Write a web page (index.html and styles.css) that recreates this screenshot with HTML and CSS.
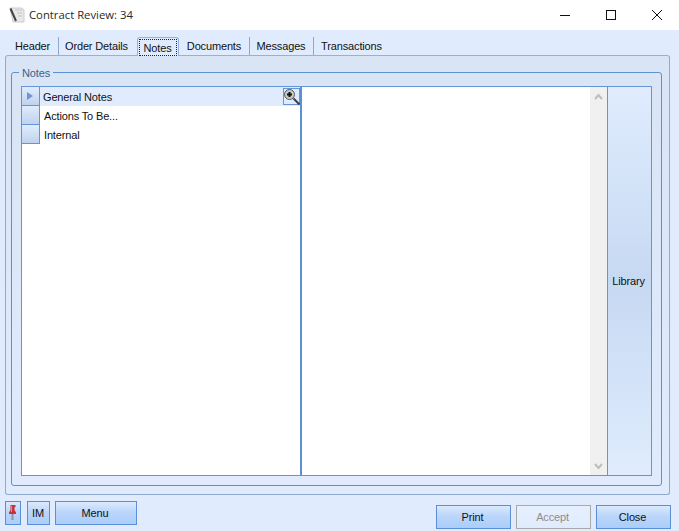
FILE: index.html
```html
<!DOCTYPE html>
<html lang="en">
<head>
<meta charset="utf-8">
<title>Contract Review: 34</title>
<link rel="stylesheet" href="styles.css">
</head>
<body>
<div class="window">
  <header class="titlebar">
    <svg class="doc-icon" width="16" height="16" viewBox="0 0 16 16">
      <path d="M1 1H13L15 3V15H4Z" fill="#e8e8e8" stroke="#cccccc"/>
      <path d="M1.500 1.500L7 14" stroke="#3c4248" stroke-width="2"/>
      <path d="M6 3H13M8 6H13M9 9H13" stroke="#c4c4c4"/>
    </svg>
    <span class="title">Contract Review: 34</span>
    <div class="winbtns">
      <svg width="12" height="12" viewBox="0 0 12 12"><path d="M1 6.500H11" stroke="#111"/></svg>
      <svg width="12" height="12" viewBox="0 0 12 12"><rect x="1.500" y="1.500" width="9" height="9" fill="none" stroke="#111"/></svg>
      <svg width="12" height="12" viewBox="0 0 12 12"><path d="M1 1L11 11M11 1L1 11" stroke="#111"/></svg>
    </div>
  </header>
  <main class="client">
    <nav class="tabs">
      <span class="tab sep w-header">Header</span>
      <span class="tab w-order">Order Details</span>
      <span class="tab active"><span class="focus">Notes</span></span>
      <span class="tab sep w-docs">Documents</span>
      <span class="tab sep w-msgs">Messages</span>
      <span class="tab w-trans">Transactions</span>
    </nav>
    <section class="panel">
      <div class="group">
        <span class="legend">Notes</span>
        <div class="grid">
          <div class="list">
            <div class="row selected">
              <span class="rowhead"><span class="arrow"></span></span>
              <span class="cell">General Notes</span>
              <span class="zoombtn">
                <svg width="16" height="16" viewBox="0 0 16 16">
                  <circle cx="5.500" cy="5.500" r="5" fill="#c4c8c8" stroke="#5a5a5a"/>
                  <path d="M3 5.500H8M5.500 3V8" stroke="#111" stroke-width="2"/>
                  <path d="M9.500 9.500L15.500 15.500" stroke="#3a3f48" stroke-width="2"/>
                </svg>
              </span>
            </div>
            <div class="row">
              <span class="rowhead"></span>
              <span class="cell plain">Actions To Be...</span>
            </div>
            <div class="row">
              <span class="rowhead"></span>
              <span class="cell plain">Internal</span>
            </div>
          </div>
          <div class="editor"></div>
          <div class="scrollbar">
            <svg width="9" height="7" viewBox="0 0 9 7"><path d="M1 6L4.500 2L8 6" fill="none" stroke="#bdbdbd" stroke-width="2"/></svg>
            <svg width="9" height="7" viewBox="0 0 9 7"><path d="M1 1L4.500 5L8 1" fill="none" stroke="#bdbdbd" stroke-width="2"/></svg>
          </div>
          <div class="library">Library</div>
        </div>
      </div>
    </section>
    <footer class="actions">
      <div class="actions-left">
        <button class="btn pin" type="button">
          <svg width="10" height="19" viewBox="0 0 10 19">
            <path d="M4.500 10V16" stroke="#8f959c" stroke-width="2"/>
            <path d="M2.500 1H7.500V3L6.500 3.500V6L8 8.500V10H1V8.500L2.500 6V3.500L2.500 3Z" fill="#c8323a"/>
            <path d="M3.500 2V8" stroke="#e88a8a"/>
          </svg>
        </button>
        <button class="btn im" type="button">IM</button>
        <button class="btn menu" type="button">Menu</button>
      </div>
      <div class="actions-right">
        <button class="btn wide" type="button">Print</button>
        <button class="btn wide disabled" type="button">Accept</button>
        <button class="btn wide" type="button">Close</button>
      </div>
    </footer>
  </main>
</div>
</body>
</html>
```
FILE: styles.css
```css
* { box-sizing: border-box; }
html, body { margin: 0; height: 100%; }
body { font: 11px "Liberation Sans", Arial, sans-serif; letter-spacing: -0.15px; color: #111; overflow: hidden; }
.window { width: 679px; height: 531px; display: flex; flex-direction: column; background: #e0ecfe; }

.titlebar { height: 30px; flex: none; background: #fff; display: flex; align-items: center; padding-left: 9px; }
.doc-icon { flex: none; margin-right: 4px; }
.title { font: 11.3px "Open Sans", sans-serif; letter-spacing: 0; color: #2a2a2a; padding-bottom: 2px; }
.winbtns { margin-left: auto; display: flex; gap: 34px; padding-right: 16px; }

.client { flex: 1; display: flex; flex-direction: column; }

.tabs { height: 25px; flex: none; display: flex; align-items: flex-end; padding-left: 7px; }
.tab { height: 18px; line-height: 19px; text-align: center; flex: none; border-right: 1px solid transparent; }
.sep { border-right-color: #8fa9cf; }
.w-header { width: 52px; }
.w-order { width: 78px; padding-left: 6px; text-align: left; }
.active { width: 42px; height: 19px; margin-bottom: -1px; border: 1px solid #8fb2e4; border-bottom: 0; border-radius: 3px 3px 0 0; background: #e0ecfe; position: relative; z-index: 1; padding: 1px 1px 0; }
.focus { display: block; height: 17px; line-height: 16px; padding-right: 1px; border: 1px dotted #222; }
.w-docs { width: 71px; }
.w-msgs { width: 64px; padding-right: 1px; }
.w-trans { width: 76px; }

.panel { height: 440px; flex: none; margin: 0 9px 0 5px; padding: 16px 7px 8px 5px; border: 1px solid #8fa9cf; border-top-color: #8fb2e4; border-radius: 3px; background: linear-gradient(#d9e5f4, #e0ecfe); }

.group { position: relative; height: 414px; padding: 13px 9px 9px; border: 1px solid #5b90d6; border-radius: 3px; }
.legend { position: absolute; left: 7px; top: -7px; padding: 0 3px; line-height: 14px; color: #3d5f8e; background: #d9e5f4; }

.grid { height: 390px; display: flex; border: 1px solid #6496d6; background: #fff; }
.list { width: 280px; flex: none; border-right: 2px solid #5b90d6; }
.row { height: 19px; display: flex; align-items: center; position: relative; }
.selected { background: #e0ecfe; }
.rowhead { width: 18px; height: 100%; flex: none; display: flex; align-items: center; padding-left: 5px; background: linear-gradient(#e0ecfe, #c0d2ec); border-right: 1px solid #6496d6; border-bottom: 1px solid #6496d6; }
.arrow { width: 0; height: 0; border-left: 6px solid #6d96d2; border-top: 4px solid transparent; border-bottom: 4px solid transparent; }
.cell { padding-left: 3px; }
.plain { padding-left: 4px; }
.zoombtn { position: absolute; right: 0; top: 1px; width: 17px; height: 17px; border: 1px solid #6496d6; }
.zoombtn svg { display: block; overflow: visible; }

.editor { flex: 1; }
.scrollbar { width: 17px; flex: none; background: #f0f0f0; display: flex; flex-direction: column; justify-content: space-between; align-items: center; padding: 6px 0 5px; }
.library { width: 44px; flex: none; padding-right: 2px; border-left: 1px solid #6496d6; background: linear-gradient(#e0ecfe, #c6d9f2 50%, #e0ecfe); display: flex; align-items: center; justify-content: center; }

.actions { flex: 1; display: flex; justify-content: space-between; padding: 0 8px 0 5px; }
.actions-left { display: flex; gap: 6px; padding-top: 6px; }
.actions-right { display: flex; gap: 5px; padding-top: 10px; }
.btn { height: 24px; padding: 0 2px 0 0; font: inherit; letter-spacing: inherit; color: #111; border: 1px solid #5b90d6; background: linear-gradient(#dbe9fd, #bcd6fa 45%, #a9cdfb); }
.pin { width: 16px; padding: 0; display: flex; align-items: center; justify-content: center; }
.im { width: 23px; margin-right: -1px; padding: 0 1px 0 0; }
.menu { width: 82px; }
.wide { width: 75px; }
.disabled { color: #8d8d8d; border-color: #a9a9a9; background: linear-gradient(#e6effd, #e0ecfe); }
```
